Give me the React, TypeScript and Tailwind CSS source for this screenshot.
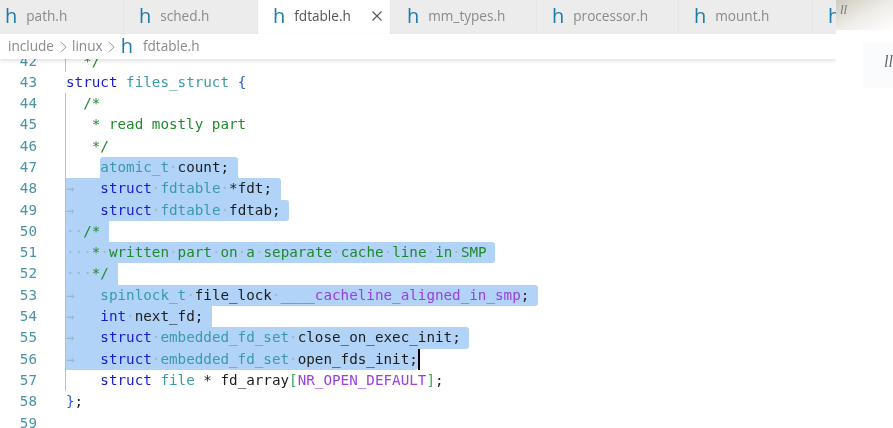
const mono = "font-['DejaVu_Sans_Mono','Liberation_Mono',monospace]";
const C = {
  kw: "text-[#1a1ad0]", ty: "text-[#3b9aa8]", tx: "text-[#1c1c1c]", cm: "text-[#1f8a2c]", mac: "text-[#9a3fe0]", ws: "text-[#9fb6cf]", br: "text-[#3aa655]", bl: "text-[#2b5fd0]",
};
type Seg = [string, string];
type L = { n: number; pre?: string; sel?: boolean; guide?: boolean; segs: Seg[]; extra?: boolean; cursor?: boolean; r?: string };
const s = (t: string): Seg => [t, C.ws];
const lines: L[] = [
  { n: 42, guide: true, pre: "  ", segs: [["*/", C.cm]] },
  { n: 43, segs: [["struct", C.kw], [" ", ""], ["files_struct", C.ty], [" ", ""], ["{", C.bl]] },
  { n: 44, guide: true, pre: "  ", segs: [["/*", C.cm]] },
  { n: 45, guide: true, pre: "   ", segs: [["* read mostly part", C.cm]] },
  { n: 46, guide: true, pre: "   ", segs: [["*/", C.cm]] },
  { n: 47, guide: true, pre: "    ", sel: true, extra: true, r: "rounded-t-[3px]", segs: [["atomic_t", C.ty], s("·"), ["count;", C.tx]] },
  { n: 48, guide: true, sel: true, extra: true, r: "rounded-tr-[3px]", segs: [s("→   "), ["struct", C.kw], s("·"), ["fdtable", C.ty], s("·"), ["*fdt;", C.tx]] },
  { n: 49, guide: true, sel: true, extra: true, r: "rounded-r-[3px]", segs: [s("→   "), ["struct", C.kw], s("·"), ["fdtable", C.ty], s("·"), ["fdtab;", C.tx]] },
  { n: 50, guide: true, sel: true, extra: true, segs: [s("··"), ["/*", C.cm]] },
  { n: 51, guide: true, sel: true, extra: true, r: "rounded-r-[3px]", segs: [s("···"), ["*", C.cm], s("·"), ["written", C.cm], s("·"), ["part", C.cm], s("·"), ["on", C.cm], s("·"), ["a", C.cm], s("·"), ["separate", C.cm], s("·"), ["cache", C.cm], s("·"), ["line", C.cm], s("·"), ["in", C.cm], s("·"), ["SMP", C.cm]] },
  { n: 52, guide: true, sel: true, extra: true, segs: [s("···"), ["*/", C.cm]] },
  { n: 53, guide: true, sel: true, extra: true, r: "rounded-r-[3px]", segs: [s("→   "), ["spinlock_t", C.ty], s("·"), ["file_lock", C.tx], s("·"), ["____cacheline_aligned_in_smp", C.mac], [";", C.tx]] },
  { n: 54, guide: true, sel: true, extra: true, segs: [s("→   "), ["int", C.kw], s("·"), ["next_fd;", C.tx]] },
  { n: 55, guide: true, sel: true, extra: true, r: "rounded-r-[3px]", segs: [s("→   "), ["struct", C.kw], s("·"), ["embedded_fd_set", C.ty], s("·"), ["close_on_exec_init;", C.tx]] },
  { n: 56, guide: true, sel: true, cursor: true, r: "rounded-br-[3px]", segs: [s("→   "), ["struct", C.kw], s("·"), ["embedded_fd_set", C.ty], s("·"), ["open_fds_init;", C.tx]] },
  { n: 57, guide: true, pre: "    ", segs: [["struct", C.kw], [" ", ""], ["file", C.ty], [" * fd_array", C.tx], ["[", C.br], ["NR_OPEN_DEFAULT", C.mac], ["]", C.br], [";", C.tx]] },
  { n: 58, segs: [["}", C.bl], [";", C.tx]] },
  { n: 59, segs: [] },
];
function H() {
  return <span className="font-['Open_Sans',sans-serif] text-[#1d7ba8] text-[20px] leading-none -translate-y-[1px]">h</span>;
}
function Chevron({ cls }: { cls: string }) {
  return (
    <svg className={cls} width="7" height="12" viewBox="0 0 7 12"><path d="M0.7 1L6.2 6L0.7 11" fill="none" stroke="#9c9c9c" strokeWidth="1" /></svg>
  );
}
const tabs: { name: string; w: string; pl: string; active?: boolean }[] = [
  { name: "path.h", w: "w-[124px]", pl: "pl-[5px]" },
  { name: "sched.h", w: "w-[134px]", pl: "pl-[15px]" },
  { name: "fdtable.h", w: "w-[133px]", pl: "pl-[15px]", active: true },
  { name: "mm_types.h", w: "w-[146px]", pl: "pl-[16px]" },
  { name: "processor.h", w: "w-[142px]", pl: "pl-[15px]" },
  { name: "mount.h", w: "w-[134px]", pl: "pl-[15px]" },
];
export default function App() {
  return (
    <div className="w-[893px] h-[428px] bg-white overflow-hidden flex blur-[0.4px] font-['Open_Sans',sans-serif]">
      <div className="w-[836px] shrink-0 h-full flex flex-col overflow-hidden">
        <div className="h-[34px] shrink-0 bg-[#ececec] flex overflow-hidden">
          {tabs.map((t) => (
            <div key={t.name} className={`${t.w} ${t.pl} shrink-0 flex items-center gap-[9px] border-r border-[#e6e6e6] ${t.active ? "bg-white" : ""}`}>
              <H />
              <span className={`text-[13.6px] -translate-y-[1px] ${t.active ? "text-[#555]" : "text-[#8a8a8a]"}`}>{t.name}</span>
              {t.active && <svg className="ml-[12px] -translate-y-[1px]" width="10" height="10" viewBox="0 0 10 10"><path d="M0.5 0.5L9.5 9.5M9.5 0.5L0.5 9.5" stroke="#555" strokeWidth="1.1" /></svg>}
            </div>
          ))}
          <div className="pl-[15px] flex items-center"><H /></div>
        </div>
        <div className="h-[25px] shrink-0 bg-white flex items-center pl-[8px] text-[13.6px] text-[#8a8a8a] shadow-[0_2px_4px_rgba(0,0,0,0.12)] relative z-10">
          <span>include</span>
          <Chevron cls="ml-[6px] mr-[5px]" />
          <span>linux</span>
          <Chevron cls="ml-[5px] mr-[6px]" />
          <H />
          <span className="ml-[10px]">fdtable.h</span>
        </div>
        <div className={`flex-1 overflow-hidden ${mono} text-[14.25px]`}>
          <div className="-mt-[8.5px]">
            {lines.map((l) => (
              <div key={l.n} className="flex h-[21.3px] leading-[21.3px] whitespace-pre">
                <div className="w-[37px] text-right text-[#4a93a6] shrink-0 mr-[28px]">{l.n}</div>
                <div className={`flex-1 relative border-l ${l.guide ? "border-[#bdbdbd]" : "border-transparent"}`}>
                  {l.pre && <span>{l.pre}</span>}
                  <span className={`relative inline-block ${l.sel ? "bg-[#b1d3f8]" : ""} ${l.r ?? ""} ${l.extra ? "pr-[8.6px]" : ""}`}>
                    {l.segs.map((g, i) => <span key={i} className={g[1]}>{g[0]}</span>)}
                    {l.cursor && <span className="absolute right-[-2px] top-0 w-[2px] h-full bg-black" />}
                  </span>
                </div>
              </div>
            ))}
          </div>
        </div>
      </div>
      <div className="flex-1 h-full flex flex-col overflow-hidden">
        <div className="h-[30px] shrink-0 bg-gradient-to-br from-[#cfcbc0] via-[#eeece7] to-white pt-[3px] pl-[4px] font-['Liberation_Serif',serif] italic text-[13px] leading-[14px] text-[#777]">ll</div>
        <div className="h-[45px] shrink-0 mt-[13px] ml-[27px] bg-[#f9fbfd] pt-[11px] pl-[21px] font-['Liberation_Serif',serif] italic text-[16px] leading-[16px] text-[#666]">ll</div>
      </div>
    </div>
  );
}
